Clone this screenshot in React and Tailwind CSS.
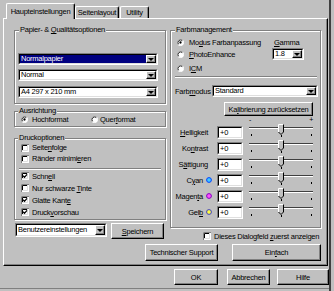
import React from 'react';

// Unterstrichener Mnemonic-Buchstabe
const U = ({ children }) => <span className="underline decoration-1 underline-offset-1">{children}</span>;

const Raised = ({ className = '', children }) => (
  <div
    className={`flex items-center justify-center bg-[#c0c0c0] border border-t-white border-l-white border-r-black border-b-black shadow-[inset_-1px_-1px_0_#808080] whitespace-nowrap ${className}`}
  >
    {children}
  </div>
);

const Sunken = ({ className = '', children }) => (
  <div className={`border border-t-[#808080] border-l-[#808080] border-r-white border-b-white ${className}`}>
    <div className="h-full flex border border-t-black border-l-black border-r-[#dfdfdf] border-b-[#dfdfdf] bg-white">
      {children}
    </div>
  </div>
);

const Arrow = () => (
  <div className="w-[10px] h-full shrink-0 flex items-center justify-center bg-[#c0c0c0] border border-t-white border-l-white border-r-black border-b-black shadow-[inset_-1px_-1px_0_#808080]">
    <div className="w-0 h-0 border-x-[3px] border-x-transparent border-t-[3px] border-t-black" />
  </div>
);

const Combo = ({ value, selected, className = '' }) => (
  <Sunken className={className}>
    <div
      className={`flex-1 min-w-0 flex items-center pl-[1px] leading-[8px] overflow-hidden ${
        selected ? 'bg-[#000080] text-white' : ''
      }`}
    >
      {value}
    </div>
    <Arrow />
  </Sunken>
);

const Radio = ({ checked }) => (
  <svg width="7" height="7" viewBox="0 0 12 12" className="shrink-0">
    <circle cx="6" cy="6" r="5.5" fill="#fff" />
    <path d="M2.1 9.9A5.5 5.5 0 0 1 9.9 2.1" stroke="#808080" strokeWidth="1.2" fill="none" />
    <path d="M9.9 2.1A5.5 5.5 0 0 1 2.1 9.9" stroke="#fff" strokeWidth="1.2" fill="none" />
    <path d="M2.9 9.1A4.4 4.4 0 0 1 9.1 2.9" stroke="#000" strokeWidth="1.2" fill="none" />
    {checked && <circle cx="6" cy="6" r="2" fill="#000" />}
  </svg>
);

const Check = ({ checked }) => (
  <svg width="8" height="8" viewBox="0 0 8 8" className="shrink-0">
    <rect x="0" y="0" width="8" height="8" fill="#fff" />
    <path d="M0.5 8V0.5H8" stroke="#808080" fill="none" />
    <path d="M1.5 7V1.5H7" stroke="#000" fill="none" />
    <path d="M1 6.5H6.5V1" stroke="#dfdfdf" fill="none" />
    {checked && <path d="M2.2 3.8L3.5 5.3L6 2.4" stroke="#000" strokeWidth="1.3" fill="none" />}
  </svg>
);

const Group = ({ label, labelLeft = 'left-[4px]', className = '', children }) => (
  <div className={`relative border border-[#808080] shadow-[inset_1px_1px_0_#fff,1px_1px_0_#fff] ${className}`}>
    <span className={`absolute -top-[7px] ${labelLeft} px-[1px] bg-[#c0c0c0]`}>{label}</span>
    {children}
  </div>
);

const Etched = ({ className = '' }) => (
  <div className={`h-[2px] border-t border-t-[#808080] border-b border-b-white ${className}`} />
);

const Slider = () => (
  <svg width="66" height="14" viewBox="0 0 66 14" className="shrink-0 ml-[5px] self-start">
    <rect x="1" y="3" width="64" height="1" fill="#404040" />
    <rect x="1" y="4" width="64" height="1" fill="#fff" />
    <polygon points="30.5,0.5 35.5,0.5 35.5,8 33,10.5 30.5,8" fill="#c0c0c0" />
    <polyline points="30.5,8 30.5,0.5 35.5,0.5" stroke="#fff" fill="none" />
    <polyline points="35.5,0.5 35.5,8 33,10.5 30.5,8" stroke="#000" fill="none" />
    <rect x="3" y="10" width="1" height="2" fill="#000" />
    <rect x="33" y="11" width="1" height="2" fill="#000" />
    <rect x="63" y="10" width="1" height="2" fill="#000" />
  </svg>
);

const Dot = ({ fill, ring }) => (
  <svg width="6" height="6" viewBox="0 0 6 6" className="shrink-0 ml-[3px] mr-[1px]">
    <circle cx="3" cy="3" r="2.4" fill={fill} stroke={ring} strokeWidth="1" />
  </svg>
);

const sliderRows = [
  { key: 'hell', label: <><U>H</U>elligkeit</> },
  { key: 'kon', label: <>Ko<U>n</U>trast</> },
  { key: 'sat', label: <>S<U>ä</U>ttigung</> },
  { key: 'cyan', label: <>C<U>y</U>an</>, dot: ['#40c8ff', '#0040ff'] },
  { key: 'mag', label: <>Magen<U>t</U>a</>, dot: ['#ff50ff', '#8000c0'] },
  { key: 'gelb', label: <>Gel<U>b</U></>, dot: ['#ffff40', '#4040c0'] },
];

const druckOptionen1 = [
  { key: 'sf', label: <>Seite<U>n</U>folge</>, checked: false },
  { key: 'rm', label: <>Ränder minimi<U>e</U>ren</>, checked: false },
];

const druckOptionen2 = [
  { key: 'sc', label: <>Schn<U>e</U>ll</>, checked: true },
  { key: 'ns', label: <>Nur schwarze <U>T</U>inte</>, checked: false },
  { key: 'gk', label: <>Glatte Kant<U>e</U></>, checked: true },
  { key: 'dv', label: <>Druck<U>v</U>orschau</>, checked: true },
];

export default function App() {
  return (
    <div className="w-[334px] h-[291px] bg-[#c0c0c0] overflow-hidden whitespace-nowrap font-['Liberation_Sans',Arial,sans-serif] text-[7.5px] tracking-[-0.25px] leading-[11px] text-black shadow-[inset_-3px_0_0_#c0c0c0,inset_-5px_0_0_#404040,inset_0_-2px_0_#c0c0c0,inset_0_-3px_0_#808080]">
      {/* Reiter */}
      <div className="relative z-10 flex items-end h-[18px] pl-[6px]">
        <div className="h-[16px] -mb-[1px] w-[69px] flex justify-center pt-[2px] bg-[#c0c0c0] border-t border-l border-t-white border-l-white border-r border-r-black shadow-[inset_-1px_0_0_#808080] rounded-t-[2px]">
          Haupteinstellungen
        </div>
        <div className="h-[12px] w-[44px] flex justify-center bg-[#c0c0c0] border-t border-l border-t-white border-l-white border-r border-r-black shadow-[inset_-1px_0_0_#808080] rounded-t-[2px]">
          Seitenlayout
        </div>
        <div className="h-[12px] w-[29px] ml-[1px] flex justify-center bg-[#c0c0c0] border-t border-l border-t-white border-l-white border-r border-r-black shadow-[inset_-1px_0_0_#808080] rounded-t-[2px]">
          Utility
        </div>
      </div>

      {/* Reiterfläche */}
      <div className="ml-[3px] w-[325px] h-[248px] flex flex-col border border-t-white border-l-white border-r-black border-b-black shadow-[inset_-1px_-1px_0_#808080] pl-[10px] pr-[6px] pt-[11px]">
        <div className="flex gap-[4px]">
          {/* linke Spalte */}
          <div className="w-[152px] flex flex-col">
            <Group label={<>Papier- &amp; <U>Q</U>ualitätsoptionen</>} className="h-[74px]">
              <div className="flex flex-col ml-[3px] mt-[22px] w-[140px]">
                <Combo value="Normalpapier" selected className="h-[12px]" />
                <Combo value="Normal" className="h-[12px] mt-[4px]" />
                <Combo value="A4 297 x 210 mm" className="h-[12px] mt-[5px]" />
              </div>
            </Group>

            <Group label="Ausrichtung" labelLeft="left-[3px]" className="h-[16px] mt-[7px]">
              <div className="flex items-center h-full pl-[6px]">
                <div className="w-[70px] flex items-center gap-[4px]">
                  <Radio checked />
                  <span>Hochformat</span>
                </div>
                <div className="flex items-center gap-[2px]">
                  <Radio />
                  <span>Quer<U>f</U>ormat</span>
                </div>
              </div>
            </Group>

            <Group label="Druckoptionen" labelLeft="left-[3px]" className="h-[82px] mt-[11px]">
              <div className="flex flex-col pt-[3px]">
                {druckOptionen1.map((o) => (
                  <div key={o.key} className="h-[11px] flex items-center gap-[3px] pl-[6px]">
                    <Check checked={o.checked} />
                    <span>{o.label}</span>
                  </div>
                ))}
                <Etched className="mt-[4px] ml-[4px] mr-[4px]" />
                {druckOptionen2.map((o) => (
                  <div key={o.key} className="h-[12px] flex items-center gap-[3px] pl-[6px]">
                    <Check checked={o.checked} />
                    <span>{o.label}</span>
                  </div>
                ))}
              </div>
            </Group>

            <div className="flex items-start mt-[3px]">
              <Combo value="Benutzereinstellungen" className="h-[14px] w-[92px] ml-[1px]" />
              <Raised className="h-[16px] w-[53px] ml-[4px]">
                <span><U>S</U>peichern</span>
              </Raised>
            </div>
          </div>

          {/* rechte Spalte */}
          <div className="w-[151px] flex flex-col">
            <Group label="Farbmanagement" className="h-[198px]">
              <div className="flex pt-[5px]">
                <div className="flex-1 flex flex-col pl-[6px]">
                  <div className="h-[12px] flex items-center gap-[5px]">
                    <Radio checked />
                    <span>Mo<U>d</U>us Farbanpassung</span>
                  </div>
                  <div className="h-[12px] flex items-center gap-[5px]">
                    <Radio />
                    <span><U>P</U>hotoEnhance</span>
                  </div>
                  <div className="h-[12px] mt-[2px] flex items-center gap-[5px]">
                    <Radio />
                    <span>I<U>C</U>M</span>
                  </div>
                </div>
                <div className="w-[32px] mr-[16px] pt-[1px] flex flex-col">
                  <span className="pl-[2px]"><U>G</U>amma</span>
                  <Combo value="1.8" className="h-[12px]" />
                </div>
              </div>

              <Etched className="mt-[2px] ml-[4px] mr-[3px]" />

              <div className="flex items-center h-[12px] mt-[7px] pl-[4px]">
                <span className="w-[37px]">Farb<U>m</U>odus</span>
                <Combo value="Standard" className="h-[12px] w-[106px]" />
              </div>

              <Raised className="h-[14px] w-[89px] ml-[53px] mt-[5px]">
                <span>Ka<U>l</U>ibrierung zurücksetzen</span>
              </Raised>

              <div className="h-[8px] w-[64px] ml-[78px] flex justify-between items-center text-[7px] leading-[8px]">
                <span>-</span>
                <span>+</span>
              </div>

              {sliderRows.map((r) => (
                <div key={r.key} className="h-[16px] flex items-center">
                  <div className="w-[42px] flex justify-end items-center">
                    <span className={r.dot ? '' : 'mr-[5px]'}>{r.label}</span>
                    {r.dot && <Dot fill={r.dot[0]} ring={r.dot[1]} />}
                  </div>
                  <Sunken className="h-[13px] w-[26px] ml-[4px]">
                    <span className="pl-[1px] leading-[9px]">+0</span>
                  </Sunken>
                  <Slider />
                </div>
              ))}
            </Group>

            <div className="h-[8px] mt-[4px] ml-[33px] flex items-center gap-[3px]">
              <Check />
              <span>Dieses Dialogfeld <U>z</U>uerst anzeigen</span>
            </div>
          </div>
        </div>

        <div className="flex justify-end gap-[14px] mt-[4px]">
          <Raised className="h-[17px] w-[73px]">Technischer Support</Raised>
          <Raised className="h-[17px] w-[89px]">
            <span>Ein<U>f</U>ach</span>
          </Raised>
        </div>
      </div>

      {/* Dialogschaltflächen */}
      <div className="flex mt-[3px] ml-[174px]">
        <Raised className="h-[16px] w-[44px]">OK</Raised>
        <Raised className="h-[16px] w-[43px] ml-[9px]">Abbrechen</Raised>
        <Raised className="h-[16px] w-[52px] ml-[7px]">Hilfe</Raised>
      </div>
    </div>
  );
}
